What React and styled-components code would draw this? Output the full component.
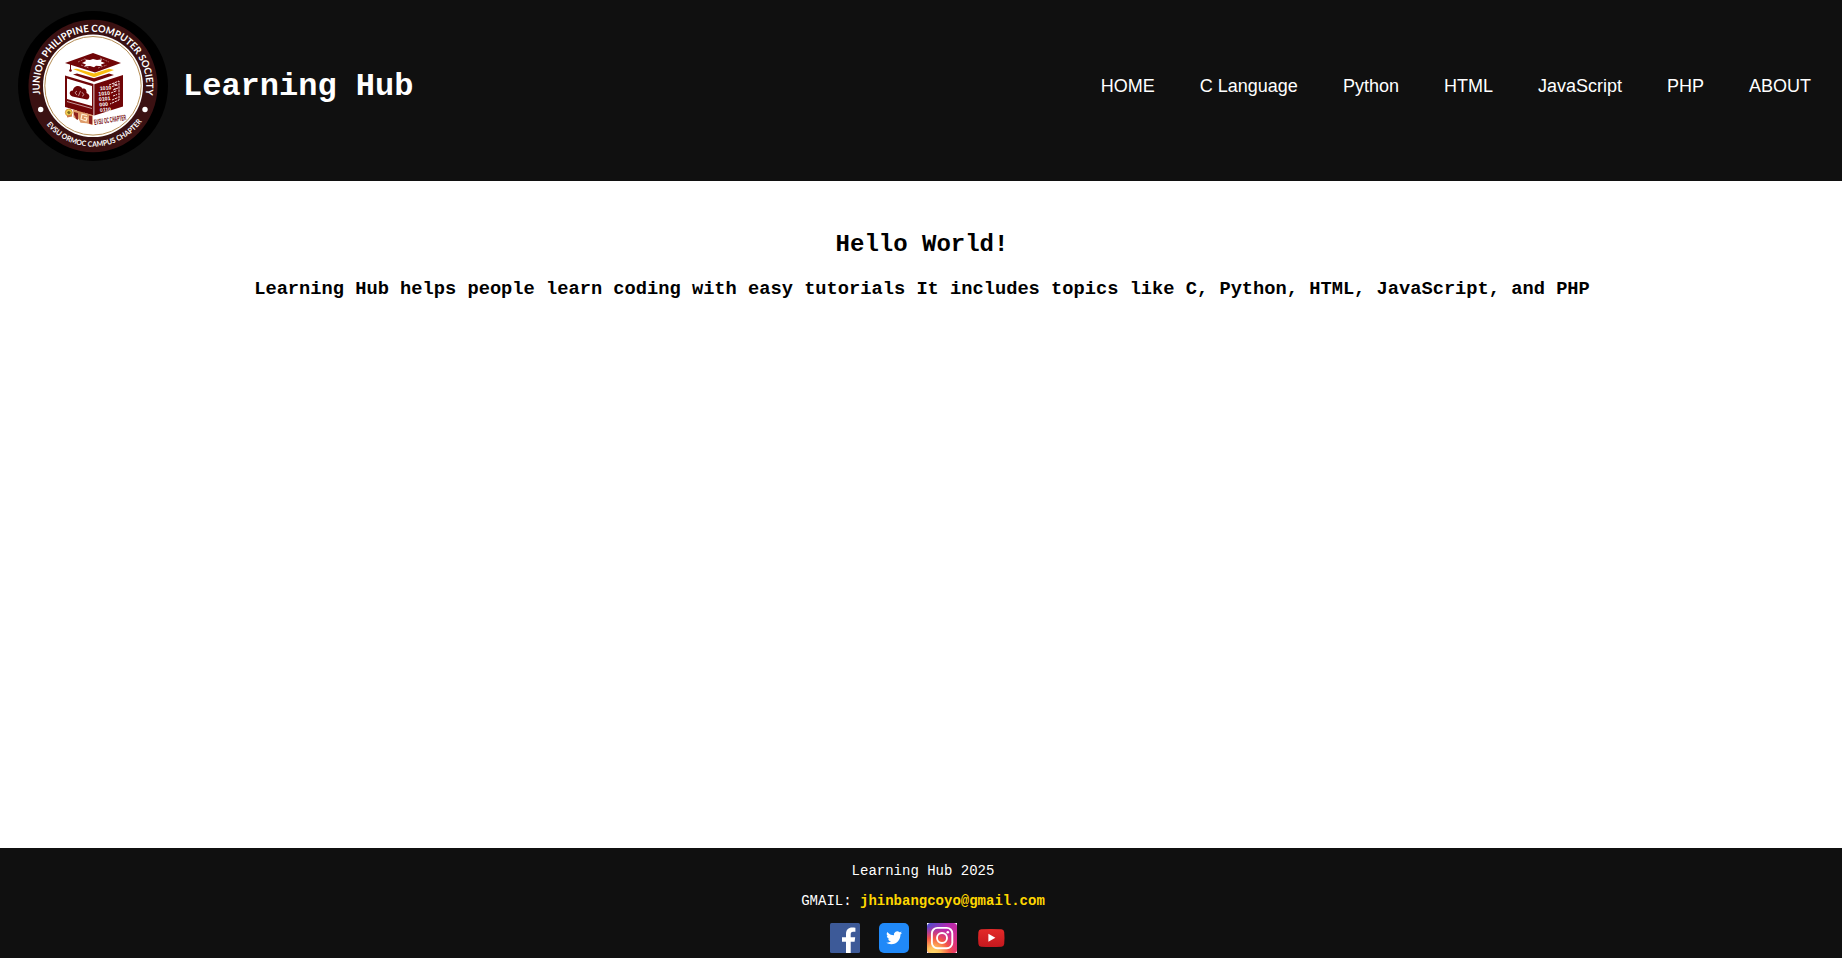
import React from "react";
import styled, { createGlobalStyle } from "styled-components";

const GlobalStyle = createGlobalStyle`
  * { box-sizing: border-box; }
  body {
    margin: 0;
    background: #fff;
    font-family: "Liberation Mono", "Courier New", monospace;
  }
`;

const Page = styled.div`
  display: flex;
  flex-direction: column;
  height: 958px;
`;

const Header = styled.header`
  display: flex;
  align-items: flex-start;
  justify-content: space-between;
  height: 181px;
  padding: 11px 31px 0 18px;
  background: #101010;
  color: #fff;
`;

const Brand = styled.div`
  display: flex;
  align-items: center;
  gap: 15px;
  height: 150px;
`;

const Seal = styled.svg`
  display: block;
  width: 150px;
  height: 150px;
  overflow: visible;
`;

const SealText = styled.text`
  font-family: Lato, sans-serif;
  font-weight: 700;
  font-size: ${(p) => p.$size}px;
  fill: #fff;
`;

const CodeText = styled.text`
  font-family: "Liberation Sans", sans-serif;
  font-weight: 700;
  font-size: ${(p) => p.$size}px;
  fill: ${(p) => p.$fill};
`;

const Title = styled.h1`
  margin: 0;
  padding-top: 2px;
  font-size: 32px;
  line-height: 36px;
`;

const Nav = styled.nav`
  display: flex;
  align-items: center;
  gap: 45px;
  height: 150px;
`;

const NavLink = styled.a`
  color: #fff;
  font-family: "Liberation Sans", Arial, sans-serif;
  font-size: 18px;
  line-height: 20px;
  text-decoration: none;
`;

const Main = styled.main`
  flex: 1;
  padding: 50px 0 0 2px;
  text-align: center;
  color: #000;
`;

const Heading = styled.h2`
  margin: 0;
  font-size: 24px;
  line-height: 27px;
`;

const Lead = styled.h3`
  margin: 21px 0 0;
  font-size: 18.72px;
  line-height: 21px;
`;

const Footer = styled.footer`
  display: flex;
  flex-direction: column;
  align-items: center;
  height: 110px;
  padding-top: 15px;
  background: #101010;
  color: #fff;
  font-size: 14px;
  line-height: 16px;
`;

const FooterLine = styled.p`
  margin: 0 0 14px;
  padding-left: 4px;
`;

const Mail = styled.a`
  color: #ffd700;
  font-weight: 700;
  text-decoration: none;
`;

const Socials = styled.div`
  display: flex;
  gap: 18.6px;
  padding-right: 6.2px;
`;

const SocialIcon = styled.svg`
  display: block;
  width: 30px;
  height: 30px;
`;

const links = ["HOME", "C Language", "Python", "HTML", "JavaScript", "PHP", "ABOUT"];
const bits = ["1010", "1010", "0101", "000", "0110"];

function Logo() {
  return (
    <Seal viewBox="0 0 150 150" role="img" aria-label="Junior Philippine Computer Society">
      <defs>
        <path id="arcTop" d="M22.3 83.2 A53.3 54 0 1 1 127.2 85.5" />
        <path id="arcBottom" d="M28.5 113.5 A60.5 61 0 0 0 127 106" />
      </defs>
      <circle cx="75" cy="75" r="75" fill="#000" />
      <ellipse cx="75" cy="75" rx="64.5" ry="66.3" fill="#3b1112" />
      <ellipse cx="75" cy="74.8" rx="50" ry="51.3" fill="#fff" />
      <ellipse cx="75" cy="74.8" rx="48.2" ry="49.3" fill="none" stroke="#b58d55" strokeWidth="1" />
      <SealText $size={9.8}>
        <textPath href="#arcTop" textLength="185.5" lengthAdjust="spacingAndGlyphs">JUNIOR PHILIPPINE COMPUTER SOCIETY</textPath>
      </SealText>
      <SealText $size={7.4}>
        <textPath href="#arcBottom" textLength="110" lengthAdjust="spacingAndGlyphs">EVSU ORMOC CAMPUS CHAPTER</textPath>
      </SealText>
      <circle cx="22.7" cy="98.5" r="2.7" fill="#fff" />
      <circle cx="127" cy="98.5" r="2.7" fill="#fff" />

      <path d="M47 52 75 42 103 52 77 61.5Z" fill="#700507" />
      <path d="M64 52 68 50 67 48.5 72 49 75 48 79 49 84 48.3 83 50.5 87 52 83 53.5 84 55.2 78 54.8 76 56.2 72 55 66 55.5 68 53.5Z" fill="#fff" />
      <path d="M60 51 68 47.3M63 54 71 57M82 47 91 51M80 57 89 54" stroke="#c99b9c" strokeWidth=".7" strokeDasharray="2 1" />
      <path d="M52.5 53V59" stroke="#700507" strokeWidth="1" />
      <circle cx="52.5" cy="59.5" r="1.3" fill="#700507" />
      <path d="M55 58 59 57.7 76 62.5 91 57.8 96 59 76 66.3Z" fill="#f9bd10" />
      <path d="M55 63.5 59 62.5 76 67.2 91 62.5 96 64 76 70.8Z" fill="#700507" />

      <path d="M47 64.5 75.5 73V104.5L47 96Z" fill="#700507" />
      <path d="M49 67.5 74 75V95L49 88Z" fill="#fff" />
      <path d="M49 90.5 74 97.5" stroke="#fff" strokeWidth=".6" />
      <path d="M54.5 85.5c-4.5-2-3-6.5.5-6 0-4.500 7-6.500 9.500-1.800 3-.8 4.500 2 4 4.300 4 1.500 3.500 6 .5 6.500Z" fill="#700507" />
      <path d="m59 80-2 1.7 2 2.5m5-3 2 2.500-2 1.700m-1.500-5.500-2 5" fill="none" stroke="#e7caca" strokeWidth=".7" />
      <path d="m59 98 7 2v2l3 1v1.5l-12-3V100l2 .5Z" fill="#700507" />

      <path d="M76.3 73.3 105 64V95.5L76.3 104.5Z" fill="#700507" />
      <g transform="rotate(-5 82 80)">
        {bits.map((bit, i) => (
          <CodeText key={i} x={i === 0 ? 82 : 80.2} y={79.2 + i * 5.4} $size={5.2} $fill="#fff">{bit}</CodeText>
        ))}
      </g>
      <path d="M91 74 101 70V89L92 93M94 75.5 99 74M95 79l5-2M93 82l6-2.5M95 85l4-1.5M94 89l6-2.5M96 72v2l3-1v2M97 77v2" fill="none" stroke="#f1dede" strokeWidth="1" strokeDasharray="2.5 .7" />

      <circle cx="50.8" cy="101.5" r="3.4" fill="#f2d553" stroke="#d99a43" />
      <path d="m49 101.5 1.2-1.4 2 .5.5 1.5-1.8 1.3Z" fill="#806c24" />
      <path d="m49 105.5 5-1" stroke="#d17b46" strokeWidth="1.8" />
      <path d="m55 98.5 19.5 5.5v10l-6-1.8-6-.5-2-4-2 .5-3-2Z" fill="#df9b68" />
      <path d="m56 101 4 1v7l-2-1-1-3-1-1Zm15 3.5 3.3.8v8.2l-3.3-1Z" fill="#8e201d" />
      <path d="m69 104.5-5-1.3-1 5 5 1.8 1-3-3-.5" fill="none" stroke="#fff0d8" strokeWidth="1.2" />
      <CodeText transform="translate(76.5 114) rotate(-9) scale(.43 1)" $size={7.8} $fill="#700507">EVSU OC CHAPTER</CodeText>
    </Seal>
  );
}

function Facebook() {
  return (
    <SocialIcon viewBox="0 0 30 30" aria-label="Facebook">
      <rect width="30" height="30" rx="1.5" fill="#3d5a98" />
      <path d="M16 30V18.7h-4v-4.4h4V11c0-4.2 2.4-6.4 6.2-6.4 1.4 0 2.7.1 3.2.2v4h-2.2c-2 0-2.5 1-2.5 2.4v3.1h4.5l-.6 4.4h-3.9V30Z" fill="#fff" />
    </SocialIcon>
  );
}

function Twitter() {
  return (
    <SocialIcon viewBox="0 0 30 30" aria-label="Twitter">
      <rect width="30" height="30" rx="5" fill="#2089f8" />
      <path transform="translate(7.2 6.8) scale(.66)" d="M23.95 4.57a10 10 0 0 1-2.82.77 4.96 4.96 0 0 0 2.16-2.72c-.95.55-2 .95-3.13 1.18a4.92 4.92 0 0 0-8.38 4.48C7.69 8.1 4.07 6.13 1.64 3.16a4.92 4.92 0 0 0 1.52 6.57 4.9 4.9 0 0 1-2.23-.61v.06c0 2.39 1.7 4.38 3.95 4.83a5 5 0 0 1-2.21.08 4.94 4.94 0 0 0 4.6 3.42A9.87 9.87 0 0 1 0 19.54a14 14 0 0 0 7.55 2.21c9.05 0 14-7.5 14-13.98l-.01-.64a9.94 9.94 0 0 0 2.41-2.56Z" fill="#fff" />
    </SocialIcon>
  );
}

function Instagram() {
  return (
    <SocialIcon viewBox="0 0 30 30" aria-label="Instagram">
      <defs>
        <linearGradient id="igBase" x1="0" y1="0" x2="1" y2="1">
          <stop offset="0" stopColor="#474fce" />
          <stop offset=".4" stopColor="#b62ab1" />
          <stop offset="1" stopColor="#eb316c" />
        </linearGradient>
        <radialGradient id="igGlow" cx=".2" cy="1.05" r=".95">
          <stop offset="0" stopColor="#ffe06f" />
          <stop offset=".25" stopColor="#ffc15b" />
          <stop offset=".58" stopColor="#f45645" />
          <stop offset="1" stopColor="#df2c7b" stopOpacity="0" />
        </radialGradient>
      </defs>
      <rect width="30" height="30" fill="#fff" />
      <rect width="30" height="30" rx="3.5" fill="url(#igBase)" />
      <rect width="30" height="30" rx="3.5" fill="url(#igGlow)" />
      <rect x="4.9" y="4.9" width="20.4" height="20.4" rx="5.5" fill="none" stroke="#fff" strokeWidth="1.9" />
      <circle cx="15" cy="15" r="5" fill="none" stroke="#fff" strokeWidth="1.9" />
      <circle cx="20.8" cy="9.2" r="1.3" fill="#fff" />
    </SocialIcon>
  );
}

function YouTube() {
  return (
    <SocialIcon viewBox="0 0 30 30" aria-label="YouTube">
      <defs>
        <linearGradient id="ytRed" x1="0" y1="0" x2="0" y2="1">
          <stop offset="0" stopColor="#e42a29" />
          <stop offset="1" stopColor="#c5181e" />
        </linearGradient>
      </defs>
      <path d="M5.1 6.2Q15 5.6 25.4 6.2q2.4.2 2.8 2.8.6 6 0 12-.3 2.5-2.8 2.7-10 .6-20.3 0-2.4-.2-2.7-2.7-.6-6 0-12 .3-2.6 2.7-2.8Z" fill="url(#ytRed)" />
      <path d="m12.4 10.8 7 4-7 4Z" fill="#fff" />
    </SocialIcon>
  );
}

export default function App() {
  return (
    <>
      <GlobalStyle />
      <Page>
        <Header>
          <Brand>
            <Logo />
            <Title>Learning Hub</Title>
          </Brand>
          <Nav>
            {links.map((label) => (
              <NavLink key={label} href="#">{label}</NavLink>
            ))}
          </Nav>
        </Header>
        <Main>
          <Heading>Hello World!</Heading>
          <Lead>
            Learning Hub helps people learn coding with easy tutorials It includes topics like C, Python, HTML, JavaScript, and PHP
          </Lead>
        </Main>
        <Footer>
          <FooterLine>Learning Hub 2025</FooterLine>
          <FooterLine>
            GMAIL: <Mail href="#">jhinbangcoyo@gmail.com</Mail>
          </FooterLine>
          <Socials>
            <Facebook />
            <Twitter />
            <Instagram />
            <YouTube />
          </Socials>
        </Footer>
      </Page>
    </>
  );
}
